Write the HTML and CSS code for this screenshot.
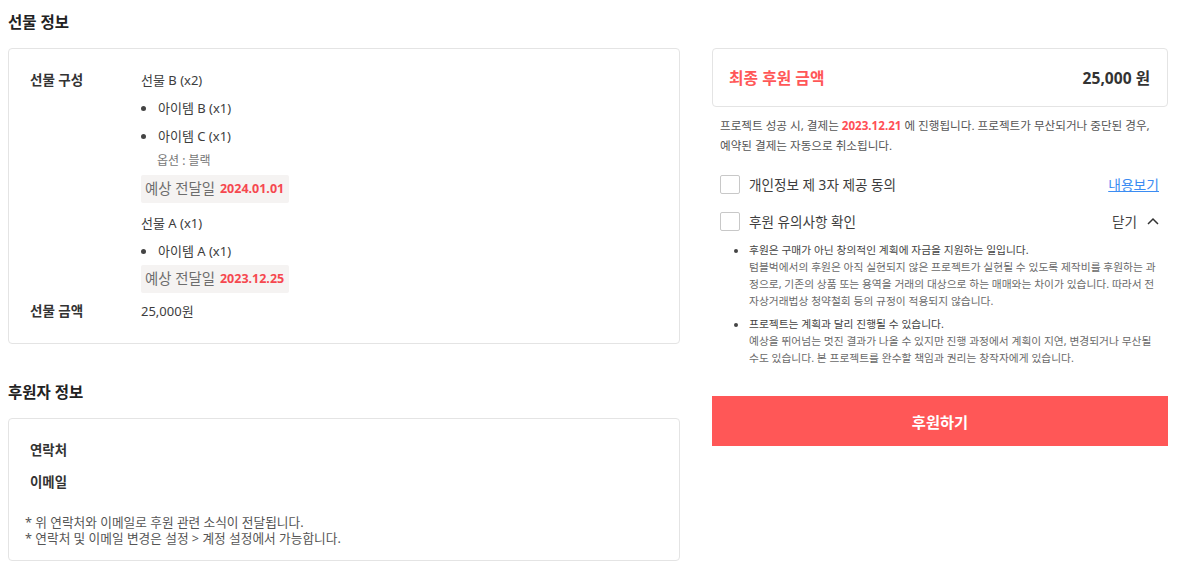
FILE: index.html
```html
<!DOCTYPE html>
<html lang="ko">
<head>
<meta charset="utf-8">
<title>후원하기</title>
<link rel="stylesheet" href="styles.css">
</head>
<body>
<div class="page">
  <main class="main">
    <h2 class="section-title">선물 정보</h2>
    <section class="card gift-card">
      <div class="row">
        <div class="label">선물 구성</div>
        <div class="value">
          <div class="gift">
            <div class="gift-name">선물 B (x2)</div>
            <ul class="items">
              <li class="item">아이템 B (x1)</li>
              <li class="item">아이템 C (x1)</li>
            </ul>
            <div class="option">옵션 : 블랙</div>
            <div class="delivery"><span class="delivery-label">예상 전달일</span><span class="delivery-date">2024.01.01</span></div>
          </div>
          <div class="gift">
            <div class="gift-name">선물 A (x1)</div>
            <ul class="items">
              <li class="item">아이템 A (x1)</li>
            </ul>
            <div class="delivery"><span class="delivery-label">예상 전달일</span><span class="delivery-date">2023.12.25</span></div>
          </div>
        </div>
      </div>
      <div class="row row-price">
        <div class="label">선물 금액</div>
        <div class="value">25,000원</div>
      </div>
    </section>

    <h2 class="section-title second">후원자 정보</h2>
    <section class="card backer-card">
      <div class="backer-label">연락처</div>
      <div class="backer-label">이메일</div>
      <p class="notes">* 위 연락처와 이메일로 후원 관련 소식이 전달됩니다.<br>* 연락처 및 이메일 변경은 설정 &gt; 계정 설정에서 가능합니다.</p>
    </section>
  </main>

  <aside class="aside">
    <div class="total">
      <span class="total-label">최종 후원 금액</span>
      <span class="total-amount">25,000 원</span>
    </div>
    <p class="notice"><span>프로젝트 성공 시, 결제는 </span><strong class="notice-date">2023.12.21</strong><span> 에 진행됩니다. 프로젝트가 무산되거나 중단된 경우,</span><br><span>예약된 결제는 자동으로 취소됩니다.</span></p>

    <div class="consent">
      <div class="check-row first">
        <span class="checkbox"></span>
        <span class="check-label">개인정보 제 3자 제공 동의</span>
        <a class="link" href="#">내용보기</a>
      </div>
      <div class="check-row">
        <span class="checkbox"></span>
        <span class="check-label">후원 유의사항 확인</span>
        <span class="toggle">닫기
          <svg class="chevron" width="12" height="8" viewBox="0 0 12 8"><polyline points="1,7 6,2 11,7" fill="none" stroke="#333" stroke-width="1.5"/></svg>
        </span>
      </div>
      <ul class="cautions">
        <li class="caution">
          <div class="caution-title">후원은 구매가 아닌 창의적인 계획에 자금을 지원하는 일입니다.</div>
          <div class="caution-text">텀블벅에서의 후원은 아직 실현되지 않은 프로젝트가 실현될 수 있도록 제작비를 후원하는 과정으로, 기존의 상품 또는 용역을 거래의 대상으로 하는 매매와는 차이가 있습니다. 따라서 전자상거래법상 청약철회 등의 규정이 적용되지 않습니다.</div>
        </li>
        <li class="caution">
          <div class="caution-title">프로젝트는 계획과 달리 진행될 수 있습니다.</div>
          <div class="caution-text">예상을 뛰어넘는 멋진 결과가 나올 수 있지만 진행 과정에서 계획이 지연, 변경되거나 무산될 수도 있습니다. 본 프로젝트를 완수할 책임과 권리는 창작자에게 있습니다.</div>
        </li>
      </ul>
    </div>

    <button class="submit" type="button">후원하기</button>
  </aside>
</div>
</body>
</html>
```

FILE: styles.css
```css
* { box-sizing: border-box; }

html, body {
  margin: 0;
  padding: 0;
  background: #ffffff;
}

body {
  font-family: "Noto Sans", "Noto Sans CJK KR", sans-serif;
  color: #3d3d3d;
}

.page {
  display: grid;
  grid-template-columns: 672px 456px;
  column-gap: 32px;
  padding: 8px 8px;
  align-items: start;
}

.section-title {
  margin: 0 0 12px;
  height: 28px;
  line-height: 28px;
  font-size: 15.5px;
  font-weight: 700;
  color: #222;
}

.section-title.second {
  margin-top: 34px;
}

.card {
  border: 1px solid #e4e4e4;
  border-radius: 4px;
  background: #fff;
}

.gift-card {
  padding: 21px 21px 22px;
}

.row {
  display: flex;
}

.row-price {
  margin-top: 8px;
  line-height: 20px;
}

.label {
  width: 111px;
  flex: none;
  font-size: 13.5px;
  line-height: 20px;
  font-weight: 700;
  color: #333;
}

.value {
  font-size: 13px;
  line-height: 20px;
  color: #3d3d3d;
}

.gift + .gift {
  margin-top: 10px;
}

.gift-name {
  font-size: 13px;
  line-height: 20px;
}

.items {
  list-style: none;
  margin: 0;
  padding: 0;
}

.item {
  display: flex;
  align-items: center;
  margin-top: 8px;
  font-size: 13px;
  line-height: 20px;
}

.item::before {
  content: "";
  width: 5px;
  height: 5px;
  border-radius: 50%;
  background: #444;
  margin: 0 12px 0 0;
  flex: none;
}

.option {
  margin-top: 6px;
  padding-left: 16px;
  font-size: 12px;
  line-height: 18px;
  color: #777;
}

.delivery {
  display: inline-flex;
  align-items: center;
  gap: 5px;
  height: 28px;
  margin-top: 4px;
  padding: 0 5px 0 4px;
  background: #f5f3f2;
  border-radius: 2px;
}

.gift .option + .delivery {
  margin-top: 5px;
}

.delivery-label {
  font-size: 14.4px;
  color: #6d6d6d;
}

.delivery-date {
  font-size: 12.5px;
  color: #f5484f;
  font-weight: 700;
}

.backer-card {
  padding: 21px 16px 14px;
}

.backer-label {
  padding-left: 5px;
  font-size: 13.4px;
  line-height: 20px;
  font-weight: 700;
  color: #333;
}

.backer-label + .backer-label {
  margin-top: 12px;
}

.notes {
  margin: 22px 0 0;
  font-size: 12.7px;
  line-height: 16px;
  color: #555;
}

/* aside */
.aside {
  padding-top: 40px;
}

.total {
  display: flex;
  align-items: center;
  justify-content: space-between;
  height: 59px;
  padding: 0 17px 0 16px;
  border: 1px solid #e4e4e4;
  border-radius: 4px;
}

.total-label {
  font-size: 15.8px;
  font-weight: 700;
  color: #ff5757;
}

.total-amount {
  font-size: 15.6px;
  font-weight: 700;
  color: #333;
}

.notice {
  margin: 9px 0 0;
  padding: 0 12px 0 8px;
  font-size: 11.6px;
  line-height: 20px;
  color: #555;
}

.notice-date {
  color: #ff4f55;
  font-weight: 700;
}

.consent {
  padding: 0 9px 0 8px;
}

.check-row {
  display: flex;
  align-items: center;
  height: 20px;
  margin-top: 17px;
}

.check-row.first {
  margin-top: 18px;
}

.checkbox {
  width: 20px;
  height: 19px;
  border: 1px solid #c8c8c8;
  border-radius: 2px;
  background: #fff;
  flex: none;
}

.check-label {
  margin-left: 9px;
  font-size: 13.6px;
  color: #3d3d3d;
}

.link {
  margin-left: auto;
  font-size: 13.8px;
  color: #3b8cf2;
  text-decoration: underline;
}

.toggle {
  margin-left: auto;
  display: flex;
  align-items: center;
  gap: 10px;
  font-size: 13.6px;
  color: #444;
}

.cautions {
  list-style: none;
  margin: 11px 0 0;
  padding: 0;
}

.caution {
  display: flex;
  flex-direction: column;
  padding-left: 29px;
  font-size: 10.75px;
  line-height: 17px;
}

.caution + .caution {
  margin-top: 6px;
}

.caution-title {
  display: flex;
  align-items: center;
  color: #444;
}

.caution-title::before {
  content: "";
  width: 4px;
  height: 4px;
  border-radius: 50%;
  background: #444;
  margin-left: -15px;
  margin-right: 11px;
  flex: none;
}

.caution-text {
  color: #6a6a6a;
}

.submit {
  display: block;
  width: 100%;
  height: 50px;
  margin-top: 29px;
  border: none;
  border-radius: 0;
  background: #ff5757;
  color: #fff;
  font-family: "Noto Sans", "Noto Sans CJK KR", sans-serif;
  font-size: 15.3px;
  font-weight: 700;
  cursor: pointer;
}
```
